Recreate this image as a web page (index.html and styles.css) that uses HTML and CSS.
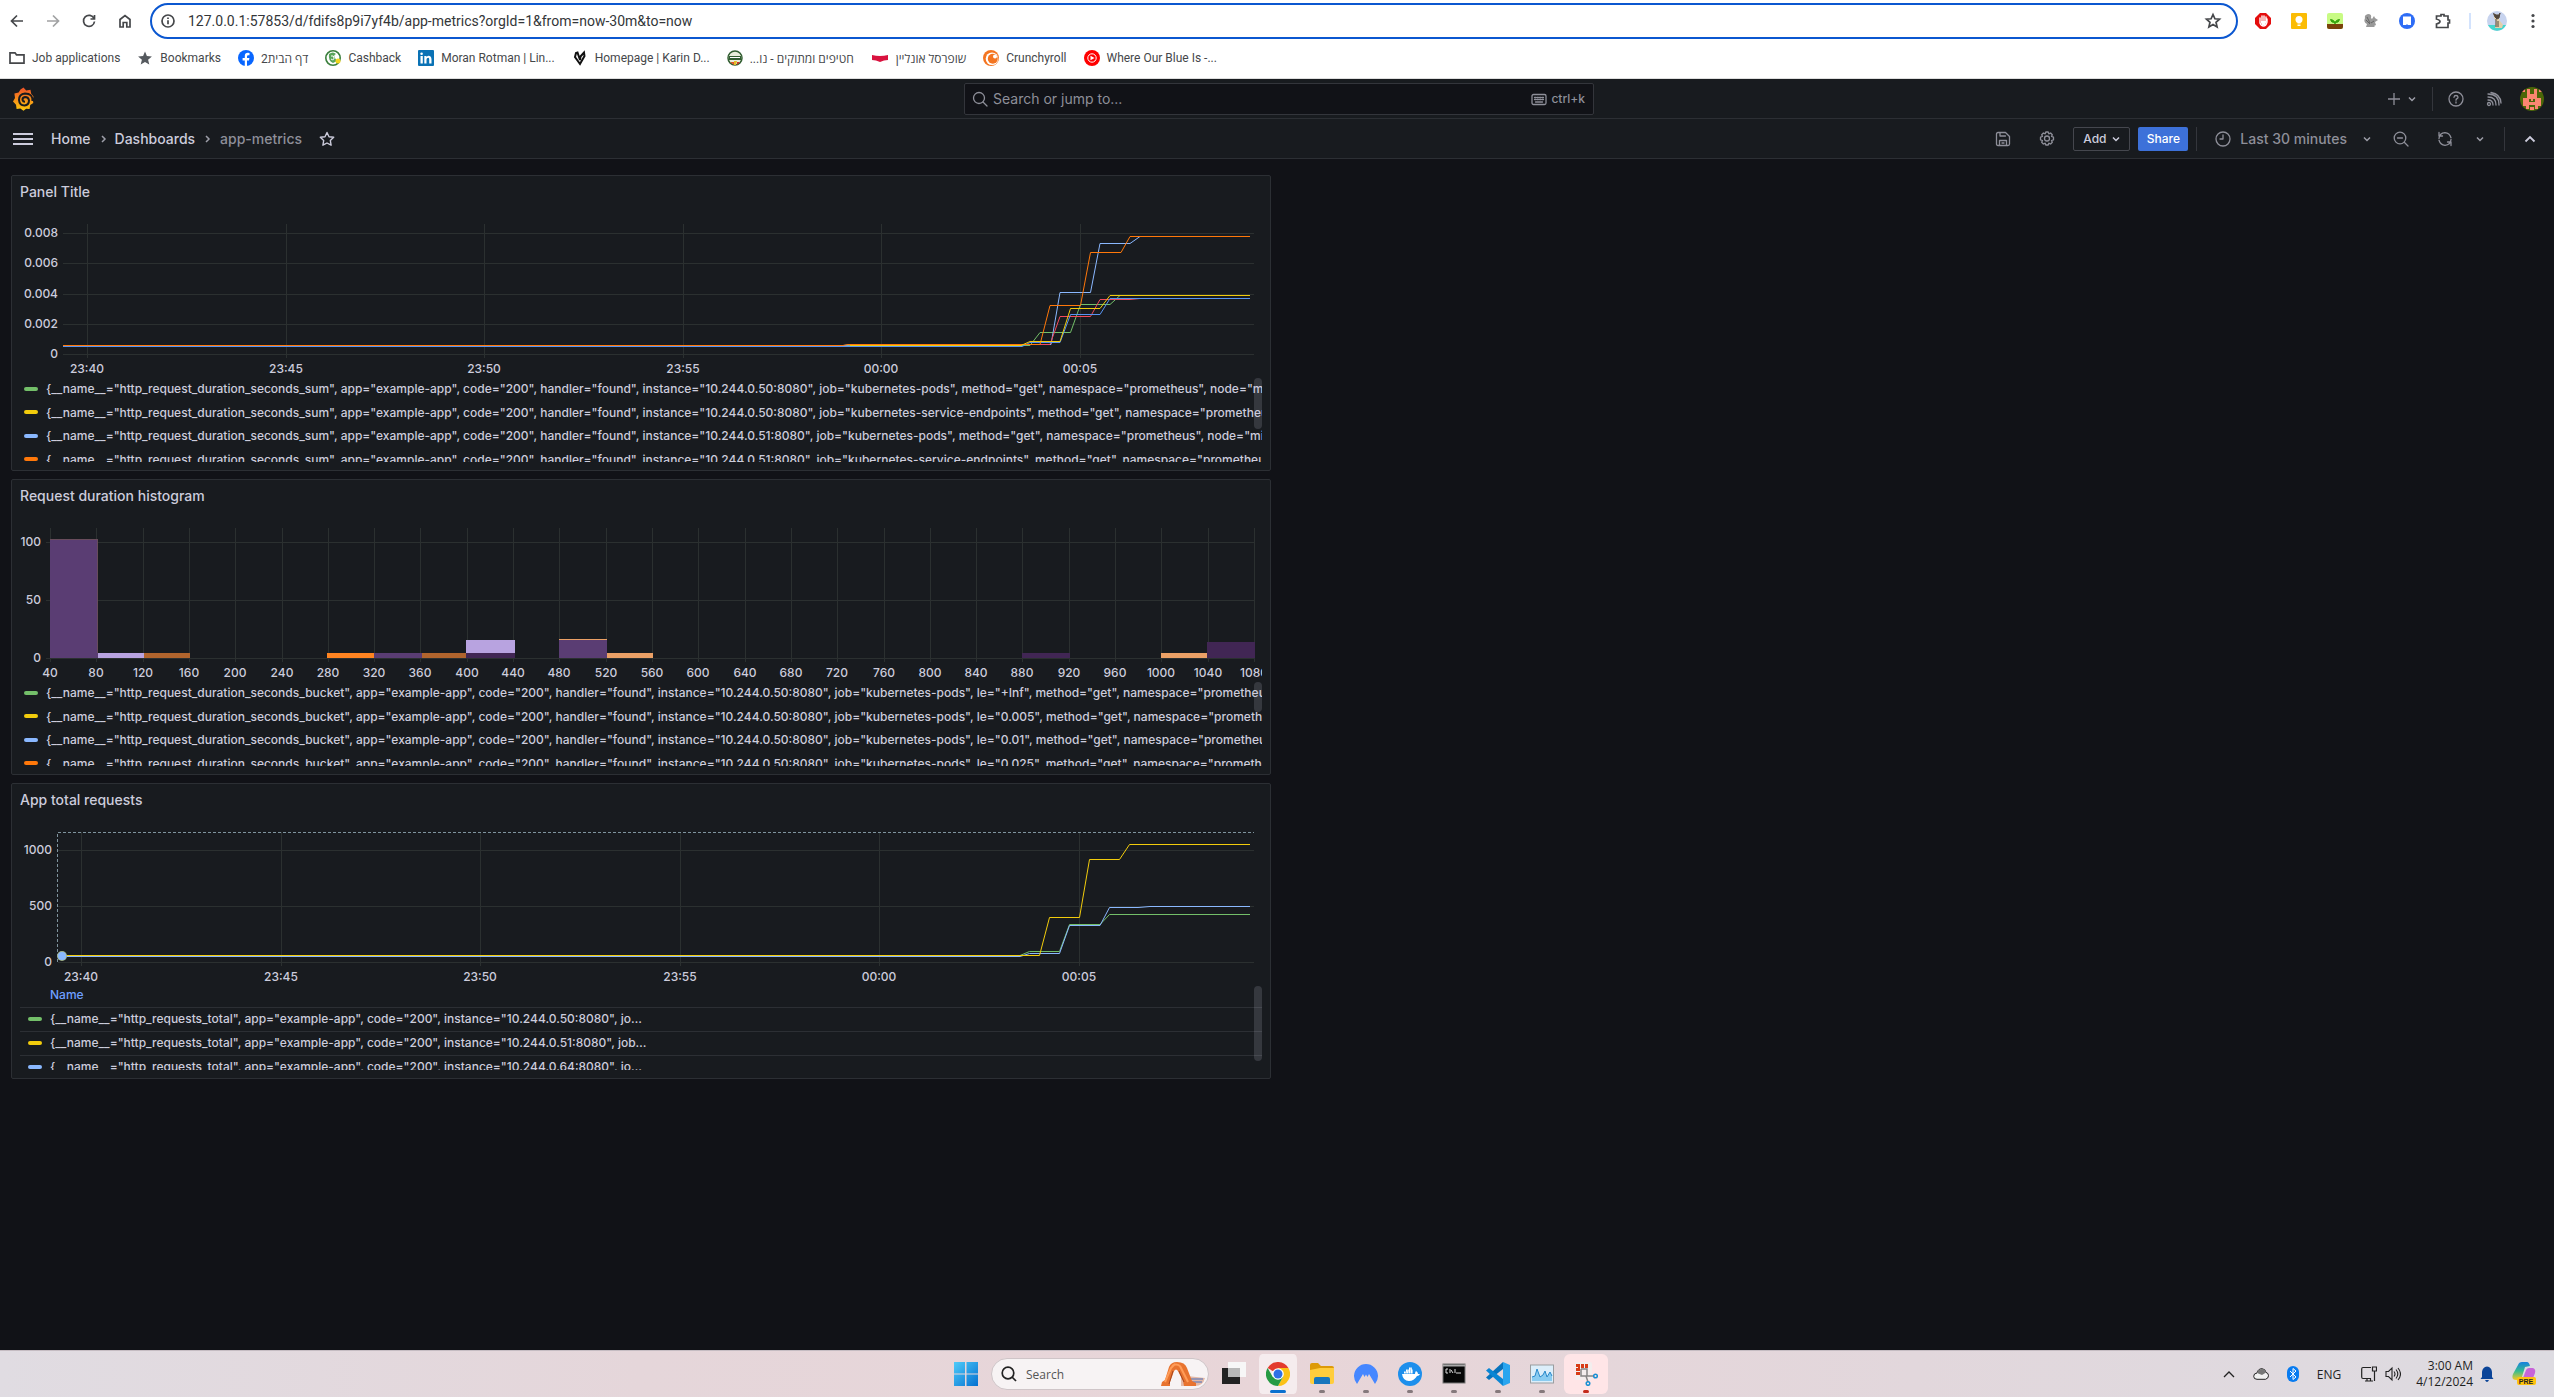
FILE: index.html
```html
<!DOCTYPE html>
<html lang="en">
<head>
<meta charset="utf-8">
<title>app-metrics - Dashboards - Grafana</title>
<link rel="stylesheet" href="styles.css">
</head>
<body>
<header class="browser">
  <div class="toolbar">
    <button class="nav-btn" aria-label="Back"><svg width="16" height="16" viewBox="0 0 16 16" class="line"><path d="M14 8H3M8 2.5L2.500 8L8 13.500"/></svg></button>
    <button class="nav-btn faded" aria-label="Forward"><svg width="16" height="16" viewBox="0 0 16 16" class="line"><path d="M2 8h11M8 2.500L13.500 8L8 13.500"/></svg></button>
    <button class="nav-btn" aria-label="Reload"><svg width="16" height="16" viewBox="0 0 16 16" class="line"><path d="M13 5.500A5.500 5.500 0 1 0 13.500 8.500M13.500 2v4h-4"/></svg></button>
    <button class="nav-btn" aria-label="Home page"><svg width="16" height="16" viewBox="0 0 16 16" class="line"><path d="M3 6.500L8 2.500l5 4V14H9.800V9.500H6.200V14H3z"/></svg></button>
    <div class="address">
      <svg width="16" height="16" viewBox="0 0 16 16" class="line"><circle cx="8" cy="8" r="6"/><path d="M8 7.300v4M8 4.500v1.500"/></svg>
      <input class="url" type="text" aria-label="Address" value="127.0.0.1:57853/d/fdifs8p9i7yf4b/app-metrics?orgId=1&amp;from=now-30m&amp;to=now">
      <button class="plain" aria-label="Bookmark this tab"><svg width="18" height="18" viewBox="0 0 18 18" class="line"><path d="M9 2.500l1.900 4.300 4.600.4-3.500 3.100 1.100 4.600L9 12.400l-4.100 2.500L6 10.300 2.500 7.200l4.600-.4z"/></svg></button>
    </div>
    <div class="extensions">
      <button class="ext-btn" aria-label="Ad blocker"><svg width="16" height="16" viewBox="0 0 16 16"><path d="M5 0h6l5 5v6l-5 5H5l-5-5V5z" fill="#e40d0d"/><path d="M5 5v5q1 3 3.500 3T12 9V6M7 3v5M9 3v5M11 4v4" stroke="#fff" stroke-width="1.400" fill="none" stroke-linecap="round"/><path d="M6 8h5v2q-1 2.500-2.500 2.500T6 10z" fill="#fff"/></svg></button>
      <button class="ext-btn" aria-label="Keep"><svg width="16" height="16" viewBox="0 0 16 16"><rect width="16" height="16" rx="1" fill="#fbbc04"/><circle cx="8" cy="6.500" r="3.500" fill="#fff"/><path d="M6.500 9h3v1.500h-3zM6.500 11.500h3V13h-3z" fill="#fff"/></svg></button>
      <button class="ext-btn" aria-label="Sprout"><svg width="16" height="16" viewBox="0 0 16 16"><rect width="16" height="16" rx="2" fill="#c8fb84"/><path d="M0 11h16v3a2 2 0 0 1-2 2H2a2 2 0 0 1-2-2z" fill="#7a430b"/><path d="M8 11Q8 7 3.500 6.500 4 10 8 9.500q4 .5 4.500-3Q8 7 8 11" fill="#36a50c" stroke="#36a50c"/></svg></button>
      <button class="ext-btn" aria-label="Squirrel"><svg width="16" height="16" viewBox="0 0 16 16"><path d="M3 14l1-3Q0 9 2 5 1 2 5 1q4 0 3 4l1 1 2-3 1 2 3 2-3 2 1 3-2 1 1 1z" fill="#999"/><path d="M4 4l3 6M3 7l4 4M11 8l-3 2" stroke="#666"/></svg></button>
      <button class="ext-btn" aria-label="Reader"><svg width="16" height="16" viewBox="0 0 16 16"><circle cx="8" cy="8" r="8" fill="#2d6cf6"/><path d="M4 3.500h8v8.500H9q-1-1.500-2 0H4z" fill="#fff"/></svg></button>
      <button class="ext-btn" aria-label="Extensions"><svg width="18" height="18" viewBox="0 0 18 18" class="line"><path d="M2.500 4h4.500V2.500h3V4h4v4h1.500v3H14v4.500H2.500V12Q6 11 6 9.500T2.500 7z"/></svg></button>
      <span class="ext-divider"></span>
      <button class="ext-btn" aria-label="Profile"><svg width="20" height="20" viewBox="0 0 20 20"><circle cx="10" cy="10" r="10" fill="#c7d3ee"/><path d="M1 14h18a10 10 0 0 1-18 0z" fill="#44d6cf"/><path d="M7 3l3 1 3-1-1 5 1 2 3 4-1 3H8l1-7-2-3z" fill="#e4cfa9"/><path d="M6.500 2.500L9 4h3l1-2-1 5-2 1-2-2zM9 8v8M11 10v6" stroke="#51463c" fill="#51463c"/></svg></button>
      <button class="ext-btn" aria-label="Menu"><svg width="16" height="16" viewBox="0 0 16 16" fill="#45474a"><circle cx="8" cy="2.500" r="1.600"/><circle cx="8" cy="8" r="1.600"/><circle cx="8" cy="13.500" r="1.600"/></svg></button>
    </div>
  </div>
  <nav class="bookmarks" aria-label="Bookmarks">
    <a href="#"><svg width="16" height="16" viewBox="0 0 16 16" class="line"><path d="M1 13.200V2.800h5l1.500 2H15v8.400z"/></svg>Job applications</a>
    <a href="#"><svg width="16" height="16" viewBox="0 0 16 16"><path d="M8 1.500l1.900 4.600 5 .4-3.800 3.200 1.200 4.900L8 12l-4.300 2.600 1.200-4.900L1.100 6.500l5-.4z" fill="#55595e"/></svg>Bookmarks</a>
    <a href="#"><svg width="16" height="16" viewBox="0 0 16 16"><circle cx="8" cy="8" r="8" fill="#0866ff"/><path d="M9 16v-5.500h2l.4-2.500H9V6.500q0-1.300 1.300-1.300h1.200V3q-4.700-.9-4.700 3v2H4.600v2.500h2.200V16z" fill="#fff"/></svg><bdi>דף הבית2</bdi></a>
    <a href="#"><svg width="16" height="16" viewBox="0 0 16 16"><circle cx="8" cy="8" r="7.200" fill="#fff" stroke="#3b7f3d" stroke-width="1.600"/><path d="M4 4q4-3 7 0-3 1-1 4l2 3-4 2Q3 11 4 4" fill="#59a55b"/><path d="M6 6q3-1 3 2T6 9" stroke="#fff" fill="none"/><circle cx="13" cy="11" r="2.500" fill="#f2d51e"/></svg>Cashback</a>
    <a href="#"><svg width="16" height="16" viewBox="0 0 16 16"><rect width="16" height="16" rx="1" fill="#0a72b5"/><path d="M2.500 6h2.300v7.500H2.500zM6.300 6h2.200v1q2-2 4 -.5 1 1 1 3v4h-2.300V9q-.4-2-2.200-.7-.5.500-.5 1.500v3.700H6.300z" fill="#fff"/><circle cx="3.600" cy="3.700" r="1.300" fill="#fff"/></svg>Moran Rotman | Lin...</a>
    <a href="#"><svg width="16" height="16" viewBox="0 0 16 16"><path d="M4 3L3 7l5 7 4.500-8L12 2.500 8.500 6.500 8 10 5.500 2.500z" fill="none" stroke="#111" stroke-width="2"/></svg>Homepage | Karin D...</a>
    <a href="#"><svg width="16" height="16" viewBox="0 0 16 16"><circle cx="8" cy="8" r="7" fill="#e8eddb" stroke="#315d31" stroke-width="1.500"/><path d="M2 6h12v4H2z" fill="#315d31"/><path d="M3 7.500h10" stroke="#fff"/><path d="M3 12h4v3z" fill="#e2552a"/><path d="M7 11h3l-1 4H7z" fill="#e3bd2a"/><path d="M10 12h3l-3 3z" fill="#cf302c"/></svg><bdi dir="rtl">חטיפים ומתוקים - נו...</bdi></a>
    <a href="#"><svg width="18" height="16" viewBox="0 0 18 16"><path d="M1 5q4 1 8 1 4 0 8-1v5q-4 0-8 2-4-2-8-2z" fill="#d9123f"/></svg><bdi dir="rtl">שופרסל אונליין</bdi></a>
    <a href="#"><svg width="16" height="16" viewBox="0 0 16 16"><circle cx="8" cy="8" r="8" fill="#f47521"/><circle cx="9" cy="8.800" r="6.300" fill="#fff"/><circle cx="9.800" cy="8.800" r="5" fill="#f47521"/><circle cx="12" cy="6.500" r="2" fill="#fff"/></svg>Crunchyroll</a>
    <a href="#"><svg width="16" height="16" viewBox="0 0 16 16"><circle cx="8" cy="8" r="8" fill="#f00"/><circle cx="8" cy="8" r="4.200" fill="none" stroke="#fff"/><path d="M6.500 5.700v4.600L10.500 8z" fill="#fff"/></svg>Where Our Blue Is -...</a>
  </nav>
</header>

<main class="grafana">
  <div class="topbar">
    <a class="logo" href="#" aria-label="Grafana home"><svg width="24" height="24" viewBox="0 0 24 24"><defs><linearGradient id="flame" x1="0" y1="1" x2="0" y2="0"><stop offset="0" stop-color="#fcc90b"/><stop offset="1" stop-color="#f05128"/></linearGradient></defs><path d="M12.500.5l2.700 3 4.300-.8.7 4 2.300 2.800-.7 3 .5 3.500-3.100 2.100-.6 4-3.500-.3-2.600 2-3.200-2.200-3.700.3-.6-4.200-3-3.300 2-3.300-.6-4.600 4.200-1L9.500 2.500z" fill="url(#flame)"/><path d="M21.500 14Q22 6.500 14 6.500 8 7 8 13q.5 5.500 5.500 5.500 4.500-.5 4.500-5-.5-3.500-4-3.500-2.700.5-2.500 3 .5 1.800 2.500 1.800" fill="none" stroke="#181b1f" stroke-width="2"/></svg></a>
    <label class="search">
      <svg width="16" height="16" viewBox="0 0 16 16" class="thin"><circle cx="7" cy="7" r="5.500"/><path d="M11 11l4 4"/></svg>
      <input type="search" placeholder="Search or jump to..." aria-label="Search or jump to">
      <svg width="16" height="16" viewBox="0 0 16 16" class="thin"><rect x="1" y="3.500" width="14" height="10" rx="1.500"/><path d="M3.500 6.500h9M3.500 8.500h9" stroke-dasharray="1.500 1"/><path d="M4.500 11h7"/></svg>
      <kbd>ctrl+k</kbd>
    </label>
    <div class="top-actions">
      <button class="new-btn" aria-label="New"><svg width="12" height="12" viewBox="0 0 12 12" class="thin"><path d="M6 0v12M0 6h12"/></svg><svg width="8" height="8" viewBox="0 0 8 8" class="chev"><path d="M1 2.500l3 3 3-3"/></svg></button>
      <span class="rule"></span>
      <button class="top-btn" aria-label="Help"><svg width="16" height="16" viewBox="0 0 16 16" class="thin"><circle cx="8" cy="8" r="7"/><path d="M6 6.300q.2-1.800 2-1.800t2 1.700q0 1-1 1.500T8 9.200M8 10.800V12"/></svg></button>
      <button class="top-btn" aria-label="News"><svg width="16" height="16" viewBox="0 0 16 16" class="thin"><circle cx="3" cy="13" r="1.500"/><path d="M2 9q5 0 5 5M2 6q8 0 8 8M2 3q11 0 11 11M5 1.500Q14.500 3 15 12"/></svg></button>
      <button class="top-btn" aria-label="Account"><svg width="24" height="24" viewBox="0 0 24 24"><defs><clipPath id="round"><circle cx="12" cy="12" r="12"/></clipPath></defs><g clip-path="url(#round)"><path d="M0 0h24v24H0z" fill="#4b6608"/><path d="M7 2h3v5h4V2h3v9h4v8h-3v3h-3v-4H9v4H6v-3H3v-8h4zM2 2h3v3H2zM19 2h3v3h-3zM10 20h4v3h-4z" fill="#fb8671"/><path d="M9 12h6v3H9z" fill="#4b6608"/><path d="M11 11h2v3h-2z" fill="#fb8671"/></g></svg></button>
    </div>
  </div>
  <div class="crumbbar">
    <nav class="crumbs" aria-label="Breadcrumbs">
      <button class="plain menu" aria-label="Toggle menu"><svg width="20" height="14" viewBox="0 0 20 14" stroke="#ccccdc" stroke-width="2"><path d="M0 2h20M0 7h20M0 12h20"/></svg></button>
      <a href="#">Home</a>
      <svg width="8" height="8" viewBox="0 0 8 8" class="chev"><path d="M3 1l3 3-3 3"/></svg>
      <a href="#">Dashboards</a>
      <svg width="8" height="8" viewBox="0 0 8 8" class="chev"><path d="M3 1l3 3-3 3"/></svg>
      <span class="here">app-metrics</span>
      <button class="plain star" aria-label="Mark as favorite"><svg width="16" height="16" viewBox="0 0 16 16" fill="none" stroke="#ccccdc" stroke-width="1.400" stroke-linejoin="round"><path d="M8 1.500l2 4.200 4.700.6-3.400 3.200.8 4.700L8 12l-4.100 2.200.8-4.700L1.300 6.300 6 5.700z"/></svg></button>
    </nav>
    <div class="dash-actions">
      <button class="icon-btn" aria-label="Save dashboard"><svg width="16" height="16" viewBox="0 0 16 16" class="thin"><path d="M1.500 3q0-1.500 1.500-1.500h7.500l4 4V13q0 1.500-1.500 1.500H3Q1.500 14.500 1.500 13zM5 1.500V5h5.500M4.500 14.500v-5h7v5M7 12h2"/></svg></button>
      <button class="icon-btn" aria-label="Dashboard settings"><svg width="16" height="16" viewBox="0 0 16 16" class="thin"><path d="M6.800 1h2.400l.6 1.800 1.800-.8 1.700 1.700-.8 1.800 2 .7v2.600l-2 .7.8 1.800-1.700 1.700-1.800-.8-.6 1.800H6.800l-.6-1.800-1.800.8-1.700-1.700.8-1.800-2-.7V6.200l2-.7-.8-1.800L4.400 2l1.800.8z"/><circle cx="8" cy="7.500" r="2.500"/></svg></button>
      <button class="add">Add <svg width="8" height="8" viewBox="0 0 8 8" class="chev"><path d="M1 2.500l3 3 3-3"/></svg></button>
      <button class="share">Share</button>
      <span class="rule"></span>
      <button class="range"><svg width="16" height="16" viewBox="0 0 16 16" class="thin"><circle cx="8" cy="8" r="7"/><path d="M8 4v4H5"/></svg><span>Last 30 minutes</span><svg width="8" height="8" viewBox="0 0 8 8" class="chev"><path d="M1 2.500l3 3 3-3"/></svg></button>
      <button class="icon-btn" aria-label="Zoom out time range"><svg width="16" height="16" viewBox="0 0 16 16" class="thin"><circle cx="7" cy="7" r="5.800"/><path d="M11.500 11.500l3.500 3.500M4.500 7h5"/></svg></button>
      <button class="icon-btn" aria-label="Refresh dashboard"><svg width="16" height="16" viewBox="0 0 16 16" class="thin"><path d="M2 7.500Q2.500 2 8 1.700q4.500.3 6 5M2 1.500V5h3.500M14 8.500Q13.500 14 8 14.300q-4.500-.3-6-5M14 14.500V11h-3.500"/></svg></button>
      <button class="plain interval" aria-label="Refresh interval"><svg width="8" height="8" viewBox="0 0 8 8" class="chev"><path d="M1 2.500l3 3 3-3"/></svg></button>
      <span class="rule"></span>
      <button class="plain kiosk" aria-label="Hide top bar"><svg width="12" height="12" viewBox="0 0 12 12" fill="none" stroke="#ccccdc" stroke-width="1.800"><path d="M1.500 8.500L6 4l4.500 4.500"/></svg></button>
    </div>
  </div>

  <div class="dashboard">
    <section class="panel">
      <h2>Panel Title</h2>
      <svg class="chart" viewBox="20 208 1242 168" role="img" aria-label="Request duration sum">
        <path class="grid" d="M63 233.500H1254M63 263.500H1254M63 294.500H1254M63 324.500H1254M63 354.500H1254M87.500 224V358M286.500 224V358M484.500 224V358M683.500 224V358M881.500 224V358M1080.500 224V358"/>
        <g class="y"><text x="58" y="237">0.008</text><text x="58" y="267">0.006</text><text x="58" y="298">0.004</text><text x="58" y="328">0.002</text><text x="58" y="358">0</text></g>
        <g class="x"><text x="87" y="373">23:40</text><text x="286" y="373">23:45</text><text x="484" y="373">23:50</text><text x="683" y="373">23:55</text><text x="881" y="373">00:00</text><text x="1080" y="373">00:05</text></g>
        <g class="series">
          <path stroke="#73bf69" d="M63 345.500H1030L1040 332.500H1070.500L1080.500 304.500H1110L1120 295.500H1250"/>
          <path stroke="#8ab8ff" d="M63 345.500H843L853 344.500H1051L1060 292.500H1090.500L1100 243.500H1130L1140 236.500H1250"/>
          <path stroke="#f2495c" d="M1010 345.500L1020 344.500H1050L1060 316.500H1090.500L1100 299.500H1130L1140 298.500H1200"/>
          <path stroke="#5794f2" d="M63 346.500H1022L1030 342.500H1060L1070.500 314.500H1100L1110 298.500H1250"/>
          <path stroke="#ff780a" d="M63 345.500H843L848 344.500H1040L1050 305.500H1080.500L1090.500 252.500H1121L1130 236.500H1250"/>
          <path stroke="#f2cc0c" d="M850 345.500H1021L1030 341.500H1060L1070.500 308.500H1100L1110 295.500H1250"/>
        </g>
      </svg>
      <div class="legend">
        <ul>
          <li class="green">{__name__="http_request_duration_seconds_sum", app="example-app", code="200", handler="found", instance="10.244.0.50:8080", job="kubernetes-pods", method="get", namespace="prometheus", node="minikube"}</li>
          <li class="yellow">{__name__="http_request_duration_seconds_sum", app="example-app", code="200", handler="found", instance="10.244.0.50:8080", job="kubernetes-service-endpoints", method="get", namespace="prometheus"}</li>
          <li class="blue">{__name__="http_request_duration_seconds_sum", app="example-app", code="200", handler="found", instance="10.244.0.51:8080", job="kubernetes-pods", method="get", namespace="prometheus", node="minikube"}</li>
          <li class="orange">{__name__="http_request_duration_seconds_sum", app="example-app", code="200", handler="found", instance="10.244.0.51:8080", job="kubernetes-service-endpoints", method="get", namespace="prometheus"}</li>
        </ul>
        <span class="thumb medium"></span>
      </div>
    </section>

    <section class="panel">
      <h2>Request duration histogram</h2>
      <svg class="chart" viewBox="20 512 1242 168" role="img" aria-label="Histogram of request durations">
        <path class="grid" d="M46 542.500H1255M46 600.500H1255M46 658.500H1255M50.500 528V662M96.500 528V662M143.500 528V662M189.500 528V662M235.500 528V662M282.500 528V662M328.500 528V662M374.500 528V662M420.500 528V662M467.500 528V662M513.500 528V662M559.500 528V662M606.500 528V662M652.500 528V662M698.500 528V662M745.500 528V662M791.500 528V662M837.500 528V662M884.500 528V662M930.500 528V662M976.500 528V662M1022.500 528V662M1069.500 528V662M1115.500 528V662M1161.500 528V662M1208.500 528V662M1254.500 528V662"/>
        <g>
          <path fill="#5a3d73" d="M50 539h48v119H50zM374 653h48v5h-48zM559 640h48v18h-48z"/>
          <path fill="#b8a3e0" d="M98 653h46v5H98zM466 640h49v13h-49z"/>
          <path fill="#b0642d" d="M144 653h46v5h-46zM422 653h44v5h-44z"/>
          <path fill="#ff8421" d="M327 653h47v5h-47z"/>
          <path fill="#412654" d="M466 653h49v5h-49zM1022 653h48v5h-48zM1207 642h48v16h-48z"/>
          <path fill="#eaa066" d="M607 653h46v5h-46zM1161 653h46v5h-46zM559 639h48v1h-48z"/>
          <path fill="#71574c" d="M50 539h48v1H50zM97 540h1v113h-1z" opacity=".6"/>
        </g>
        <g class="y"><text x="41" y="546">100</text><text x="41" y="604">50</text><text x="41" y="662">0</text></g>
        <g class="x"><text x="50" y="677">40</text><text x="96" y="677">80</text><text x="143" y="677">120</text><text x="189" y="677">160</text><text x="235" y="677">200</text><text x="282" y="677">240</text><text x="328" y="677">280</text><text x="374" y="677">320</text><text x="420" y="677">360</text><text x="467" y="677">400</text><text x="513" y="677">440</text><text x="559" y="677">480</text><text x="606" y="677">520</text><text x="652" y="677">560</text><text x="698" y="677">600</text><text x="745" y="677">640</text><text x="791" y="677">680</text><text x="837" y="677">720</text><text x="884" y="677">760</text><text x="930" y="677">800</text><text x="976" y="677">840</text><text x="1022" y="677">880</text><text x="1069" y="677">920</text><text x="1115" y="677">960</text><text x="1161" y="677">1000</text><text x="1208" y="677">1040</text><text x="1254" y="677">1080</text></g>
      </svg>
      <div class="legend">
        <ul>
          <li class="green">{__name__="http_request_duration_seconds_bucket", app="example-app", code="200", handler="found", instance="10.244.0.50:8080", job="kubernetes-pods", le="+Inf", method="get", namespace="prometheus"}</li>
          <li class="yellow">{__name__="http_request_duration_seconds_bucket", app="example-app", code="200", handler="found", instance="10.244.0.50:8080", job="kubernetes-pods", le="0.005", method="get", namespace="prometheus"}</li>
          <li class="blue">{__name__="http_request_duration_seconds_bucket", app="example-app", code="200", handler="found", instance="10.244.0.50:8080", job="kubernetes-pods", le="0.01", method="get", namespace="prometheus"}</li>
          <li class="orange">{__name__="http_request_duration_seconds_bucket", app="example-app", code="200", handler="found", instance="10.244.0.50:8080", job="kubernetes-pods", le="0.025", method="get", namespace="prometheus"}</li>
        </ul>
        <span class="thumb small"></span>
      </div>
    </section>

    <section class="panel">
      <h2>App total requests</h2>
      <svg class="chart" viewBox="20 816 1242 168" role="img" aria-label="App total requests">
        <path class="grid" d="M58 850.500H1254M58 906.500H1254M58 962.500H1254M81.500 832V966M281.500 832V966M480.500 832V966M680.500 832V966M879.500 832V966M1079.500 832V966"/>
        <path d="M57.500 962V832.500H1254" fill="none" stroke="#7e939d" stroke-dasharray="3 2"/>
        <g class="y"><text x="52" y="854">1000</text><text x="52" y="910">500</text><text x="52" y="966">0</text></g>
        <g class="x"><text x="81" y="981">23:40</text><text x="281" y="981">23:45</text><text x="480" y="981">23:50</text><text x="680" y="981">23:55</text><text x="879" y="981">00:00</text><text x="1079" y="981">00:05</text></g>
        <g class="series">
          <path stroke="#73bf69" d="M62 955.500H1020L1029.500 951.500H1059.500L1069.500 924.500H1100L1109.500 914.500H1250"/>
          <path stroke="#8ab8ff" d="M62 956.500H1020L1029.500 953.500H1059.500L1069.500 925.500H1100L1109.500 907.500H1138L1150 906.500H1250"/>
          <path stroke="#f2cc0c" d="M62 955.500H1039.500L1049.500 917.500H1079.500L1089.500 859.500H1119.500L1129.500 844.500H1250"/>
        </g>
        <circle cx="62" cy="956" r="5" fill="#a3b58e"/><circle cx="62" cy="956" r="4" fill="#8ab8ff"/>
      </svg>
      <div class="legend">
        <table>
          <thead><tr><th scope="col">Name</th></tr></thead>
          <tbody>
            <tr><td class="green">{__name__="http_requests_total", app="example-app", code="200", instance="10.244.0.50:8080", jo…</td></tr>
            <tr><td class="yellow">{__name__="http_requests_total", app="example-app", code="200", instance="10.244.0.51:8080", job…</td></tr>
            <tr><td class="blue">{__name__="http_requests_total", app="example-app", code="200", instance="10.244.0.64:8080", jo…</td></tr>
          </tbody>
        </table>
        <span class="thumb large"></span>
      </div>
    </section>
  </div>
</main>

<footer class="taskbar">
  <div class="apps">
    <button class="app" aria-label="Start"><svg width="24" height="24" viewBox="0 0 24 24"><defs><linearGradient id="win" x2="1" y2="1"><stop stop-color="#4ecbf9"/><stop offset="1" stop-color="#0470d0"/></linearGradient></defs><path d="M0 0h11v11.500H0zM12.500 0H24v11.500H12.500zM0 12.500h11V24H0zM12.500 12.500H24V24H12.500z" fill="url(#win)"/></svg></button>
    <label class="task-search"><svg width="16" height="16" viewBox="0 0 16 16" fill="none" stroke="#222" stroke-width="1.700"><circle cx="7" cy="7" r="5.800"/><path d="M11 11l4 4"/></svg><input type="search" placeholder="Search" aria-label="Search Windows"><svg width="44" height="24" viewBox="0 0 44 24"><path d="M20 16l6-2 18 2q-2 8-10 8H20z" fill="#e3b9a8"/><path d="M26 17h16M30 20h11" stroke="#7d88b5" stroke-width="1.500"/><path d="M0 24l1-4 3-2L8 5q2-5 8-5 8 0 10 6l5 13 4 2v3H23l-1-5L17 9q-2-3-4 0-2 6-4 11v4z" fill="#e8732f"/><path d="M4 20l6-14 4-4M19 4l8 16M11 4q4-3 8 0" stroke="#ff9c58" stroke-width="2" fill="none"/><path d="M8 22l4-13M18 9l5 11" stroke="#a54620"/></svg></label>
    <button class="app" aria-label="Task view"><svg width="24" height="24" viewBox="0 0 24 24"><path d="M0 6h18v16H0z" fill="#222"/><path d="M6 0h18v15H6z" fill="#f7f7f7"/><path d="M6 6h12v9H6z" fill="#b8b8b8"/></svg></button>
    <button class="app active" aria-label="Chrome"><svg width="24" height="24" viewBox="0 0 24 24"><path d="M12 12L1.600 6A12 12 0 0 1 22.400 6z" fill="#e33b2e"/><path d="M12 12V6h10.400A12 12 0 0 1 12 24l5-9z" fill="#fbc116"/><path d="M12 12l5 3-5 9A12 12 0 0 1 1.600 6l5.200 9z" fill="#269a43"/><circle cx="12" cy="12" r="5.800" fill="#fff"/><circle cx="12" cy="12" r="4.500" fill="#2f70e6"/></svg></button>
    <button class="app running" aria-label="File Explorer"><svg width="24" height="24" viewBox="0 0 24 24"><path d="M0 3q0-2 2-2h6l3 3h11q2 0 2 2v4H0z" fill="#dd9a08"/><path d="M0 8l10-2h14v14q0 2-2 2H2q-2 0-2-2z" fill="#ffcd3c"/><path d="M4 17q0-2 2-2h12q2 0 2 2v5H4z" fill="#1876bd"/></svg></button>
    <button class="app running" aria-label="NordVPN"><svg width="24" height="24" viewBox="0 0 24 24"><path d="M3 22A12 12 0 1 1 21 22L15 12l-1.500 3L12 12.500 10.500 15 9 12z" fill="#4687ff"/></svg></button>
    <button class="app running" aria-label="Docker"><svg width="24" height="24" viewBox="0 0 24 24"><circle cx="12" cy="12" r="12" fill="#1d8fec"/><path d="M4 12h13q0-2 1-3 2 1 2 3 1 0 2 0-1 2-3 2-3 5-8 5-6 0-7-7z" fill="#fff"/><path d="M6 10.500h9M8 8.500h7M11 6.500h3" stroke="#fff" stroke-width="1.800" stroke-dasharray="1.800 .4"/></svg></button>
    <button class="app running" aria-label="Command Prompt"><svg width="24" height="24" viewBox="0 0 24 24"><rect x="1" y="2" width="22" height="19" fill="#070707" stroke="#777"/><path d="M1 3.500h22" stroke="#aaa" stroke-width="2"/><path d="M6 7H4v4h2M8 7v4M9 8l2 3M13 7v4M14 11h5" stroke="#ddd" fill="none"/></svg></button>
    <button class="app running" aria-label="Visual Studio Code"><svg width="24" height="24" viewBox="0 0 24 24"><path d="M17 0l7 3v18l-7 3z" fill="#29a5ef"/><path d="M17 0v7L3 18l-3-2.500z" fill="#0874bd"/><path d="M17 24v-7L3 6 0 8.500z" fill="#0b86d4"/></svg></button>
    <button class="app running" aria-label="Resource Monitor"><svg width="24" height="24" viewBox="0 0 24 24"><rect x=".5" y="3" width="23" height="18" fill="#dceefa" stroke="#9a9da0"/><path d="M2 19v-4l3-1 2-7 3 8 3-2 2-4 2 6 3-5 2 4v5z" fill="#8accf1"/><path d="M2 15l3-1 2-7 3 8 3-2 2-4 2 6 3-5 2 4" fill="none" stroke="#2888ca"/></svg></button>
    <button class="app running snip" aria-label="Snipping Tool"><svg width="24" height="24" viewBox="0 0 24 24"><rect x="1" width="17" height="18" rx="2" fill="#f3eeee"/><path d="M4 13V4h10" fill="none" stroke="#d83b16" stroke-width="4" stroke-dasharray="3 1"/><path d="M7 7h6v7h7M7 7v7h5l2 6" fill="none" stroke="#858585" stroke-width="1.500"/><circle cx="21.500" cy="14" r="1.800" fill="none" stroke="#178fd3" stroke-width="1.500"/><circle cx="14" cy="21.500" r="1.800" fill="none" stroke="#178fd3" stroke-width="1.500"/></svg></button>
  </div>
  <div class="tray">
    <button class="plain" aria-label="Hidden icons"><svg width="12" height="12" viewBox="0 0 12 12" fill="none" stroke="#222" stroke-width="1.300"><path d="M1 9l5-5 5 5"/></svg></button>
    <svg width="16" height="12" viewBox="0 0 16 12"><path d="M4 11.300q-3.300 0-3.300-3T4 5q1-4.300 5-4.300 3.500.3 4 3.700 2.500.6 2.500 3.300t-3 3.600z" fill="#f1f1f1" stroke="#222"/><path d="M4 5q1-4 5-4 3.500.3 4 3.600L9 7z" fill="#777"/></svg>
    <svg width="12" height="16" viewBox="0 0 12 16"><rect width="12" height="16" rx="6" fill="#087bf0"/><path d="M3 5l6 6-3 2.500v-11L9 5l-6 6" fill="none" stroke="#fff"/></svg>
    <span class="lang">ENG</span>
    <svg class="network" width="16" height="16" viewBox="0 0 16 16" fill="none" stroke="#222" stroke-width="1.200"><path d="M10 1.500H2Q.7 1.500.7 3v8q0 1.500 1.300 1.500h8M4 15h8M6 12.500V15M9.500 12.500V15M11.500 1h4v4h-4zM13.500 5v10"/></svg>
    <svg width="16" height="16" viewBox="0 0 16 16" fill="none" stroke="#222" stroke-width="1.100"><path d="M1 5.500h2.500L7 2v12l-3.500-3.500H1zM9 5.500q2 2.500 0 5M11 3.500q3.600 4.500 0 9M13 2q5 6 0 12"/></svg>
    <div class="clock"><span>3:00 AM</span><span>4/12/2024</span></div>
    <svg width="14" height="16" viewBox="0 0 14 16" fill="#0b4498"><path d="M2 11V6q.5-5 5-5.500 4.500.5 5 5.500v5l1.500 2H.5zM5 14h4q-1 2-2 2t-2-2z"/></svg>
    <svg class="copilot" width="24" height="24" viewBox="0 0 24 24"><defs><linearGradient id="co" x2="0" y2="1"><stop stop-color="#1680df"/><stop offset=".5" stop-color="#35bb91"/><stop offset="1" stop-color="#f4c927"/></linearGradient></defs><path d="M6 3q1-3 4-3h5q2 0 3 4l-5 1-4 13H4q-5 0-3-6z" fill="url(#co)"/><path d="M14 8q1-2 3-2h4q3 1 2 5l-2 5H11z" fill="#c764d8"/><rect x="5" y="15" width="19" height="8" rx="2" fill="#ffc20e"/><text x="14" y="22" class="pre">PRE</text></svg>
  </div>
</footer>
</body>
</html>
```
FILE: styles.css
```css
* { box-sizing: border-box; }

body {
  margin: 0;
  min-height: 100vh;
  display: flex;
  flex-direction: column;
  background: #111217;
  color: #ccccdc;
  font-family: Inter, "Liberation Sans", sans-serif;
  font-size: 14px;
}

button, input { font: inherit; color: inherit; }
button { display: flex; align-items: center; justify-content: center; padding: 0; border: 0; background: none; cursor: pointer; }
input { min-width: 0; padding: 0; border: 0; outline: 0; background: none; }
a { color: inherit; text-decoration: none; }
svg { flex: none; }
.line { fill: none; stroke: #45474a; stroke-width: 1.700; }
.thin { fill: none; stroke: #8e8f99; stroke-width: 1.300; stroke-linecap: round; stroke-linejoin: round; }
.chev { fill: none; stroke: #9d9ea8; stroke-width: 1.500; }

/* Browser chrome */
.browser { height: 79px; background: #fff; color: #45474a; border-bottom: 1px solid #dedede; font-family: Roboto, "Open Sans", sans-serif; }
.toolbar { display: flex; align-items: center; height: 42px; padding: 0 3px 0 1px; }
.nav-btn { width: 32px; height: 32px; margin-right: 4px; }
.faded { opacity: .5; }
.address { flex: 1; display: flex; align-items: center; height: 36px; margin: 0 7px 0 5px; padding: 0 14px 0 8px; border: 2px solid #0b57d0; border-radius: 18px; }
.url { flex: 1; margin-left: 12px; font-size: 14px; color: #333639; }
.extensions { display: flex; align-items: center; }
.ext-btn { width: 36px; height: 32px; }
.ext-divider { width: 2px; height: 16px; margin: 0 8px; background: #d3e3fd; }
.bookmarks { display: flex; align-items: center; gap: 17px; height: 32px; padding-left: 9px; font-size: 12px; white-space: nowrap; }
.bookmarks a { display: flex; align-items: center; gap: 7px; }

/* Grafana navigation */
.grafana { flex: 1; }
.topbar { display: grid; grid-template-columns: 1fr 630px 1fr; align-items: center; height: 40px; padding: 0 3px 0 7px; background: #181b1f; border-bottom: 1px solid #2c2f34; }
.logo { display: flex; justify-content: center; width: 32px; }
.search { display: flex; align-items: center; height: 32px; padding: 0 8px 0 7px; background: #111217; border: 1px solid #33353b; border-radius: 2px; color: #8e8f99; }
.search input { flex: 1; margin-left: 5px; }
input::placeholder { color: inherit; opacity: 1; }
kbd { margin-left: 4px; font-family: inherit; font-size: 12px; font-weight: 500; }
.top-actions { display: flex; align-items: center; justify-content: flex-end; }
.new-btn { gap: 8px; margin-right: 16px; }
.rule { width: 1px; height: 24px; background: #34363c; }
.top-btn { width: 38px; height: 32px; }
.top-actions .rule { margin-right: 4px; }
.crumbbar { display: flex; align-items: center; justify-content: space-between; height: 40px; padding: 0 18px 0 13px; background: #181b1f; border-bottom: 1px solid #2c2f34; font-weight: 500; }
.crumbs, .dash-actions { display: flex; align-items: center; }
.crumbs { gap: 8px; }
.menu { margin-right: 10px; }
.here { margin-left: 1px; color: #8e8f99; }
.star { margin-left: 9px; }
.icon-btn { width: 44px; height: 32px; }
.add { gap: 6px; width: 57px; height: 24px; margin: 0 8px 0 4px; border: 1px solid #45474e; border-radius: 2px; font-size: 12px; font-weight: 500; }
.add .chev { stroke: #ccccdc; }
.share { width: 50px; height: 24px; margin-right: 8px; border-radius: 2px; background: #3d71d9; color: #fff; font-size: 12px; font-weight: 500; }
.range { gap: 9px; margin: 0 8px 0 18px; color: #8e8f99; font-weight: 500; }
.range .chev { margin-left: 7px; }
.interval { margin: 0 20px 0 9px; }
.kiosk { margin-left: 19px; }

/* Dashboard */
.dashboard { display: grid; grid-template-columns: 1fr 1fr; gap: 8px; padding: 16px 15px 16px 11px; }
.panel { grid-column: 1; min-width: 0; padding: 0 8px 8px; background: #181b1f; border: 1px solid #2c2f34; border-radius: 2px; }
h2 { margin: 0; font-size: 14px; font-weight: 500; line-height: 32px; }
.chart { display: block; width: 100%; font-size: 12px; font-weight: 500; }
.chart text { fill: #ccccdc; }
.grid { stroke: #2b3030; fill: none; }
.y { text-anchor: end; }
.x { text-anchor: middle; }
.series { fill: none; stroke-width: 1; }
.legend { position: relative; height: 86px; overflow: hidden; font-size: 12px; font-weight: 500; }
.legend ul { display: grid; grid-template-rows: repeat(4, 1fr); height: 94px; margin: 1px 0 0; padding: 0 0 0 4px; list-style: none; white-space: nowrap; }
.legend li { display: flex; align-items: center; gap: 8px; }
.legend li::before, .legend td::before { content: ""; flex: none; display: inline-block; width: 14px; height: 4px; border-radius: 2px; background: currentColor; }
.green::before { color: #73bf69; }
.yellow::before { color: #f2cc0c; }
.blue::before { color: #8ab8ff; }
.orange::before { color: #ff780a; }
.legend table { width: 100%; border-collapse: separate; border-spacing: 0; }
.legend th, .legend td { height: 24px; border-bottom: 1px solid #2c2f34; }
.legend th { padding: 0 0 2px 30px; text-align: left; font-weight: 500; color: #6e9fff; }
.legend td { padding: 0 0 2px 8px; white-space: nowrap; }
.legend td::before { margin-right: 8px; vertical-align: 2px; }
.thumb { position: absolute; top: 2px; right: 0; width: 8px; border-radius: 4px; background: #ccccdc2b; }
.small { height: 30px; }
.medium { height: 51px; }
.large { height: 75px; }

/* Windows taskbar */
.taskbar { display: grid; grid-template-columns: 1fr auto 1fr; align-items: center; height: 47px; padding-right: 2px; border-top: 1px solid #c5bcc2; background: linear-gradient(90deg, #e0dce2, #e5d6da 25%, #e8d5d8 50%, #e2d7dc 75%, #dddbe1); color: #1f1f1f; font-family: "Open Sans", "Noto Sans", sans-serif; font-size: 12px; }
.apps { grid-column: 2; display: flex; align-items: center; }
.app { position: relative; width: 44px; height: 40px; }
.app::after { position: absolute; left: 19px; bottom: 1px; width: 6px; height: 3px; border-radius: 2px; background: #85797c; }
.running::after, .active::after { content: ""; }
.active { border: 0 solid transparent; border-width: 0 3px; border-radius: 6px; background: #f5ecee padding-box; }
.active::after { left: 11px; width: 16px; background: #0b70cf; }
.snip { border-radius: 6px; background: #ffe5e7; }
.snip::after { background: #c42b1c; }
.task-search { display: flex; align-items: center; width: 218px; height: 32px; margin: 0 3px; padding: 0 3px 0 9px; border: 1px solid #cfc5c8; border-radius: 16px; background: #f7f3f4; color: #555; }
.task-search input { flex: 1; margin-left: 9px; }
.tray { display: flex; align-items: center; justify-content: flex-end; gap: 18px; padding-right: 16px; }
.lang { margin-right: 2px; }
.network { margin-right: -10px; }
.clock { display: flex; flex-direction: column; text-align: right; line-height: 16px; margin: 0 -11px 0 -3px; }
.pre { font: 700 7px "Liberation Sans", sans-serif; text-anchor: middle; fill: #222; }
```
